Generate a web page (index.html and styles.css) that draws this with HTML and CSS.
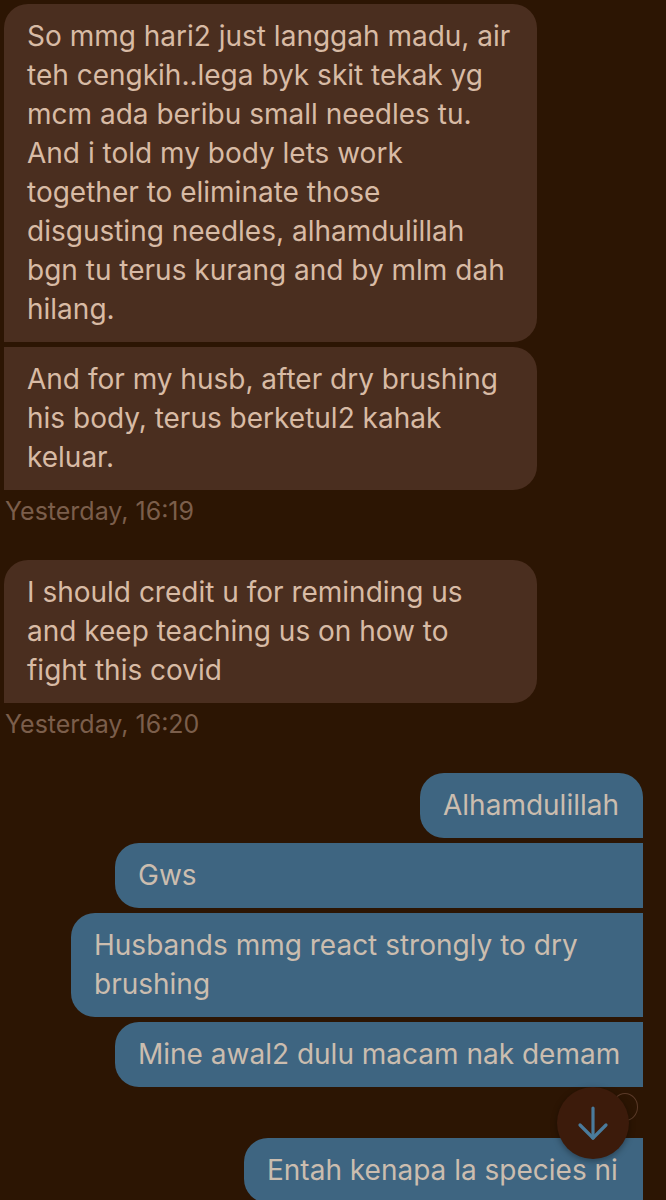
FILE: index.html
```html
<!DOCTYPE html>
<html lang="ms">
<head>
<meta charset="utf-8">
<link rel="stylesheet" href="styles.css">
</head>
<body>
<main class="chat">
  <section class="group recv">
    <div class="bubble recv-bubble first">So mmg hari2 just langgah madu, air<br>teh cengkih..lega byk skit tekak yg<br>mcm ada beribu small needles tu.<br>And i told my body lets work<br>together to eliminate those<br>disgusting needles, alhamdulillah<br>bgn tu terus kurang and by mlm dah<br>hilang.</div>
    <div class="bubble recv-bubble">And for my husb, after dry brushing<br>his body, terus berketul2 kahak<br>keluar.</div>
    <div class="time">Yesterday, 16:19</div>
  </section>
  <section class="group recv">
    <div class="bubble recv-bubble first">I should credit u for reminding us<br>and keep teaching us on how to<br>fight this covid</div>
    <div class="time">Yesterday, 16:20</div>
  </section>
  <section class="group sent">
    <div class="bubble sent-bubble first w-alham">Alhamdulillah</div>
    <div class="bubble sent-bubble w-gws">Gws</div>
    <div class="bubble sent-bubble w-husb">Husbands mmg react strongly to dry<br>brushing</div>
    <div class="bubble sent-bubble w-mine">Mine awal2 dulu macam nak demam</div>
  </section>
  <section class="group sent last-group">
    <div class="bubble sent-bubble w-entah">Entah kenapa la species ni</div>
  </section>
  <div class="seen-ring"></div>
  <button class="scroll-btn" aria-label="Scroll down">
    <svg width="40" height="40" viewBox="0 0 40 40" fill="none" stroke="#4a7b9c" stroke-width="3.2" stroke-linecap="round" stroke-linejoin="round">
      <path d="M20 5 V35"/>
      <path d="M7 22 L20 35 L33 22"/>
    </svg>
  </button>
</main>
</body>
</html>
```
FILE: styles.css
```css
html, body {
  margin: 0;
  padding: 0;
  background: #2c1503;
}
body {
  width: 666px;
  height: 1200px;
  overflow: hidden;
  font-family: Inter, "Noto Sans", sans-serif;
}
.chat {
  position: relative;
  padding: 4px 0 0 4px;
  display: flex;
  flex-direction: column;
}
.group {
  display: flex;
  flex-direction: column;
  gap: 5px;
}
.group.recv {
  align-items: flex-start;
  margin-bottom: 34px;
}
.group.sent {
  align-items: flex-end;
  margin-right: 23px;
}
.group.last-group {
  margin-top: 51px;
}
.bubble {
  box-sizing: border-box;
  padding: 13px 23px;
  font-size: 28px;
  line-height: 39px;
  white-space: nowrap;
}
.recv-bubble {
  width: 533px;
  background: #4a2e1f;
  color: #d8bba5;
  border-radius: 0 24px 24px 0;
}
.recv-bubble.first {
  border-top-left-radius: 24px;
}
.sent-bubble {
  background: #3e6581;
  color: #cbbdaf;
  border-radius: 24px 0 0 24px;
}
.sent-bubble.first {
  border-top-right-radius: 24px;
}
.w-alham { width: 223px; }
.w-gws { width: 528px; }
.w-husb { width: 572px; }
.w-mine { width: 528px; }
.w-entah { width: 399px; }
.time {
  margin-top: -5px;
  padding: 6px 0 0 1px;
  font-size: 25px;
  line-height: 30px;
  color: #7b5e4b;
}
.scroll-btn {
  position: absolute;
  left: 557px;
  top: 1087px;
  width: 72px;
  height: 72px;
  border: none;
  border-radius: 50%;
  background: #3c1b0b;
  box-shadow: 0 2px 6px rgba(0,0,0,0.35);
  display: flex;
  align-items: center;
  justify-content: center;
  padding: 0;
}
.scroll-btn svg {
  display: block;
}
.seen-ring {
  position: absolute;
  left: 612px;
  top: 1093px;
  width: 24px;
  height: 26px;
  border: 1px solid #5a3a28;
  border-radius: 50%;
}
```
